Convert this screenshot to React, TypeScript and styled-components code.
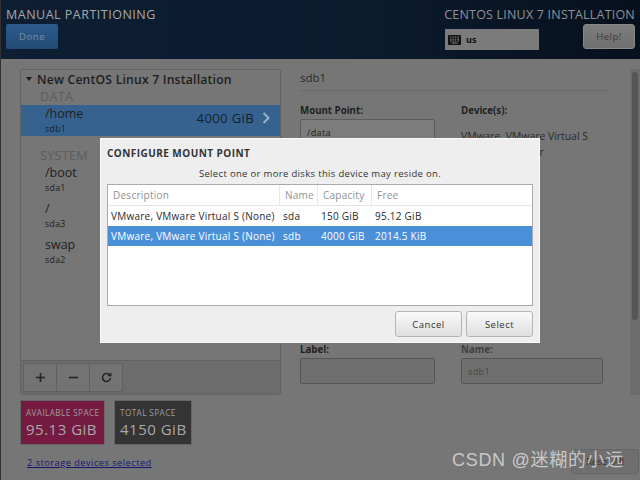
import { createGlobalStyle, styled } from "styled-components";

const Global = createGlobalStyle`
  html, body {
    margin: 0;
    padding: 0;
    width: 640px;
    height: 480px;
    overflow: hidden;
  }
  body {
    font-family: "Open Sans", "Noto Sans", "Noto Sans CJK SC", sans-serif;
    color: #2a2a2a;
  }
`;

const Page = styled.div`
  position: relative;
  width: 640px;
  height: 480px;
  background: #767676;
  border-left: 1px solid #333;
  box-sizing: border-box;
  overflow: hidden;
`;

const Header = styled.header`
  height: 59px;
  box-sizing: border-box;
  display: flex;
  justify-content: space-between;
  padding: 7px 5px 0 5px;
  background: linear-gradient(90deg, #0e1f33 0%, #0b1a2d 60%, #07101d 100%);
`;

const HeaderTitle = styled.div`
  font-size: 12.5px;
  line-height: 16px;
  color: #a5a9ad;
  letter-spacing: 0.5px;
`;

const DoneButton = styled.div`
  width: 52px;
  height: 25px;
  margin-top: 1px;
  border-radius: 2px;
  background: linear-gradient(#2c5c8c, #234a75);
  color: #7a8ea3;
  font-size: 9.5px;
  letter-spacing: 0.6px;
  display: flex;
  align-items: center;
  justify-content: center;
`;

const HeaderRight = styled.div`
  display: flex;
  flex-direction: column;
  align-items: flex-end;
`;

const InstallTitle = styled.div`
  font-size: 12.5px;
  line-height: 16px;
  color: #8e9296;
  letter-spacing: 0.2px;
  white-space: nowrap;
`;

const HeaderControls = styled.div`
  display: flex;
  align-items: flex-start;
  gap: 44px;
  margin-top: 1px;
  width: 190px;
`;

const Layout = styled.div`
  display: flex;
  align-items: center;
  gap: 5px;
  width: 94px;
  height: 21px;
  margin-top: 5px;
  padding-left: 3px;
  box-sizing: border-box;
  background: #7b7b7b;
  color: #111;
  font-size: 9px;
  font-weight: 700;
`;

const HelpButton = styled.div`
  width: 52px;
  height: 25px;
  border-radius: 3px;
  background: linear-gradient(#7c7c7c, #707070);
  border: 1px solid #888;
  box-sizing: border-box;
  color: #3a3a3a;
  font-size: 9.5px;
  letter-spacing: 0.5px;
  display: flex;
  align-items: center;
  justify-content: center;
`;

const Main = styled.main`
  display: grid;
  grid-template-columns: 261px 1fr 10px;
  padding: 10px 0 0 19px;
  column-gap: 19px;
`;

const LeftColumn = styled.div`
  display: flex;
  flex-direction: column;
`;

const ListPanel = styled.div`
  height: 326px;
  box-sizing: border-box;
  border: 1px solid #636363;
  border-radius: 2px;
  display: flex;
  flex-direction: column;
`;

const ListBody = styled.div`
  flex: 1;
`;

const InstallHeading = styled.div`
  display: flex;
  align-items: center;
  gap: 5px;
  height: 18px;
  padding-left: 5px;
  font-size: 12.2px;
  font-weight: 600;
  color: #1d1d1d;
  letter-spacing: 0.2px;
  white-space: nowrap;
`;

const Caret = styled.span`
  width: 0;
  height: 0;
  border-left: 3.5px solid transparent;
  border-right: 3.5px solid transparent;
  border-top: 4px solid #1d1d1d;
`;

const GroupLabel = styled.div<{ $gap?: number }>`
  height: 17px;
  line-height: 17px;
  margin-top: ${(p) => p.$gap ?? 0}px;
  padding-left: 19px;
  font-size: 12.6px;
  color: #5c5c5c;
  letter-spacing: 0.3px;
`;

const Mount = styled.div<{ $selected?: boolean }>`
  height: ${(p) => (p.$selected ? 31 : 36)}px;
  box-sizing: border-box;
  padding: 1px 10px 0 24px;
  background: ${(p) => (p.$selected ? "#36628f" : "transparent")};
  display: flex;
  justify-content: space-between;
  align-items: flex-start;
`;

const MountNames = styled.div`
  display: flex;
  flex-direction: column;
  gap: 1px;
`;

const MountPath = styled.div`
  font-size: 12.5px;
  line-height: 15px;
  color: #202020;
`;

const MountDevice = styled.div`
  font-size: 8.8px;
  line-height: 15px;
  color: #202020;
  letter-spacing: 0.3px;
`;

const MountSize = styled.div`
  display: flex;
  align-items: center;
  gap: 8px;
  height: 24px;
  font-size: 13.2px;
  font-weight: 500;
  color: #16202c;
  letter-spacing: 0.3px;
`;

const Toolbar = styled.div`
  height: 34px;
  box-sizing: border-box;
  padding: 2px;
  background: #6c6c6c;
  border-top: 1px solid #616161;
  display: flex;
`;

const ToolGroup = styled.div`
  display: flex;
  width: 100px;
  height: 29px;
  box-sizing: border-box;
  border: 1px solid #616161;
  border-radius: 2px;
  background: #737373;
`;

const ToolButton = styled.div`
  flex: 1;
  display: flex;
  align-items: center;
  justify-content: center;
  & + & {
    border-left: 1px solid #616161;
  }
`;

const Tiles = styled.div`
  display: flex;
  gap: 9px;
  margin-top: 5px;
`;

const Tile = styled.div<{ $bg: string; $width: number }>`
  width: ${(p) => p.$width}px;
  height: 45px;
  box-sizing: border-box;
  padding: 6px 0 0 5px;
  background: ${(p) => p.$bg};
  border: 1px solid #666;
`;

const TileLabel = styled.div`
  font-size: 8.2px;
  line-height: 12px;
  color: #9f9f9f;
  letter-spacing: 0.4px;
  white-space: nowrap;
`;

const TileValue = styled.div`
  font-size: 15px;
  line-height: 20px;
  font-weight: 500;
  color: #a9a9a9;
  letter-spacing: 0.5px;
  white-space: nowrap;
`;

const StorageLink = styled.a`
  margin: 12px 0 0 7px;
  font-size: 9.2px;
  line-height: 11px;
  color: #16166e;
  text-decoration: underline;
  letter-spacing: 0.5px;
`;

const Details = styled.section`
  display: flex;
  flex-direction: column;
  height: 326px;
  width: 310px;
`;

const DetailsTitle = styled.div`
  height: 22px;
  padding-top: 1px;
  box-sizing: border-box;
  border-bottom: 1px solid #6b6b6b;
  font-size: 11.5px;
  font-weight: 500;
  color: #2a2a2a;
`;

const FieldRow = styled.div<{ $top: number }>`
  display: grid;
  grid-template-columns: 135px 142px;
  column-gap: 26px;
  margin-top: ${(p) => p.$top}px;
`;

const Field = styled.div`
  display: flex;
  flex-direction: column;
  gap: 2px;
`;

const FieldLabel = styled.div<{ $dim?: boolean }>`
  font-size: 9.7px;
  line-height: 13px;
  font-weight: 700;
  color: ${(p) => (p.$dim ? "#3f3f3f" : "#1f1f1f")};
`;

const Input = styled.div<{ $dim?: boolean }>`
  height: 26px;
  box-sizing: border-box;
  padding-left: 6px;
  display: flex;
  align-items: center;
  border: 1px solid ${(p) => (p.$dim ? "#565656" : "#5c5c5c")};
  border-radius: 2px;
  background: ${(p) => (p.$dim ? "#6f6f6f" : "#7c7c7c")};
  font-size: 9px;
  letter-spacing: 0.4px;
  color: ${(p) => (p.$dim ? "#444" : "#1f1f1f")};
`;

const DeviceText = styled.div`
  font-size: 10.4px;
  line-height: 16px;
  padding-top: 9px;
  color: #2a2a2a;
  white-space: nowrap;
`;

const ScrollTrack = styled.div`
  height: 326px;
  width: 10px;
  background: #6d6d6d;
  padding: 3px 2px 0 2px;
  box-sizing: border-box;
`;

const ScrollThumb = styled.div`
  height: 248px;
  border-radius: 3px;
  background: #555;
`;

const ResetButton = styled.div`
  position: absolute;
  right: 1px;
  bottom: 6px;
  width: 68px;
  height: 25px;
  box-sizing: border-box;
  border: 1px solid #666;
  border-radius: 3px;
  background: #6f6f6f;
  color: #333;
  font-size: 9.5px;
  display: flex;
  align-items: center;
  justify-content: center;
`;

const Dialog = styled.div`
  position: absolute;
  left: 99px;
  top: 138px;
  width: 440px;
  height: 205px;
  box-sizing: border-box;
  padding: 0 6px 0 6px;
  background: #eeeeee;
  border: 1px solid #fafafa;
  display: flex;
  flex-direction: column;
`;

const DialogTitle = styled.div`
  margin-top: 8px;
  font-size: 10px;
  line-height: 13px;
  font-weight: 700;
  color: #333;
  letter-spacing: 0.45px;
`;

const DialogHint = styled.div`
  margin-top: 7px;
  text-align: center;
  font-size: 9.5px;
  line-height: 13px;
  color: #333;
  letter-spacing: 0.33px;
`;

const DiskTable = styled.div`
  margin-top: 4px;
  height: 122px;
  box-sizing: border-box;
  border: 1px solid #a9a9a9;
  background: #fff;
`;

const DiskRow = styled.div<{ $kind?: "head" | "selected" }>`
  display: grid;
  grid-template-columns: 172px 38px 54px 1fr;
  align-items: center;
  height: ${(p) => (p.$kind === "head" ? 21 : 20)}px;
  box-sizing: border-box;
  font-size: 10px;
  letter-spacing: 0.25px;
  white-space: nowrap;
  color: ${(p) =>
    p.$kind === "selected" ? "#fff" : p.$kind === "head" ? "#8f8f8f" : "#2a2a2a"};
  background: ${(p) => (p.$kind === "selected" ? "#4a90d9" : "transparent")};
  border-bottom: ${(p) => (p.$kind === "head" ? "1px solid #e6e6e6" : "none")};
`;

const DiskCell = styled.div<{ $head?: boolean }>`
  height: 100%;
  display: flex;
  align-items: center;
  padding-left: ${(p) => (p.$head ? 5 : 3)}px;
  border-right: ${(p) => (p.$head ? "1px solid #e6e6e6" : "none")};
  &:last-child {
    border-right: none;
  }
`;

const DialogActions = styled.div`
  display: flex;
  justify-content: flex-end;
  gap: 4px;
  margin-top: 5px;
`;

const DialogButton = styled.div`
  width: 67px;
  height: 26px;
  box-sizing: border-box;
  border: 1px solid #b5b5b5;
  border-radius: 3px;
  background: linear-gradient(#fafafa, #dfdfdf);
  color: #333;
  font-size: 9.5px;
  letter-spacing: 0.5px;
  display: flex;
  align-items: center;
  justify-content: center;
`;

const Watermark = styled.div`
  position: absolute;
  left: 451px;
  top: 449px;
  font-family: "Liberation Sans", "Noto Sans CJK SC", sans-serif;
  font-size: 18px;
  line-height: 22px;
  letter-spacing: 0.7px;
  color: rgba(255, 255, 255, 0.62);
  white-space: nowrap;
`;

const KeyboardIcon = () => (
  <svg width="13" height="10" viewBox="0 0 13 10">
    <rect width="13" height="10" rx="1" fill="#111" />
    <path
      d="M2 2h1.4M4.4 2h1.4M6.8 2h1.4M9.2 2h1.8M2 4.2h1.4M4.4 4.2h1.4M6.8 4.2h1.4M9.2 4.2h1.8M2 6h1.4M4.4 6h1.4M6.8 6h1.4M9.2 6h1.8M3.5 8h6"
      stroke="#8a8a8a"
      strokeWidth="1"
      fill="none"
    />
  </svg>
);

const ChevronIcon = () => (
  <svg width="8" height="12" viewBox="0 0 8 12">
    <path d="M1.5 1l5 5-5 5" stroke="#9fb0c2" strokeWidth="2" fill="none" />
  </svg>
);

const PlusIcon = () => (
  <svg width="9" height="9" viewBox="0 0 9 9">
    <path d="M4.5 0v9M0 4.5h9" stroke="#222" strokeWidth="1.6" />
  </svg>
);

const MinusIcon = () => (
  <svg width="9" height="9" viewBox="0 0 9 9">
    <path d="M0 4.5h9" stroke="#222" strokeWidth="1.6" />
  </svg>
);

const RefreshIcon = () => (
  <svg width="11" height="11" viewBox="0 0 11 11">
    <path d="M8.8 3.2A4 4 0 1 0 9.5 6" stroke="#222" strokeWidth="1.5" fill="none" />
    <path d="M6.4 3.9L10.4 4.4L10.4 0.6Z" fill="#222" />
  </svg>
);

const mounts = [
  { path: "/boot", device: "sda1" },
  { path: "/", device: "sda3" },
  { path: "swap", device: "sda2" },
];

const disks = [
  { name: "sda", capacity: "150 GiB", free: "95.12 GiB" },
  { name: "sdb", capacity: "4000 GiB", free: "2014.5 KiB", selected: true },
];

export default function App() {
  return (
    <Page>
      <Global />
      <Header>
        <div>
          <HeaderTitle>MANUAL PARTITIONING</HeaderTitle>
          <DoneButton>Done</DoneButton>
        </div>
        <HeaderRight>
          <InstallTitle>CENTOS LINUX 7 INSTALLATION</InstallTitle>
          <HeaderControls>
            <Layout>
              <KeyboardIcon />
              us
            </Layout>
            <HelpButton>Help!</HelpButton>
          </HeaderControls>
        </HeaderRight>
      </Header>
      <Main>
        <LeftColumn>
          <ListPanel>
            <ListBody>
              <InstallHeading>
                <Caret />
                New CentOS Linux 7 Installation
              </InstallHeading>
              <GroupLabel>DATA</GroupLabel>
              <Mount $selected>
                <MountNames>
                  <MountPath>/home</MountPath>
                  <MountDevice>sdb1</MountDevice>
                </MountNames>
                <MountSize>
                  4000 GiB
                  <ChevronIcon />
                </MountSize>
              </Mount>
              <GroupLabel $gap={11}>SYSTEM</GroupLabel>
              {mounts.map((m) => (
                <Mount key={m.device}>
                  <MountNames>
                    <MountPath>{m.path}</MountPath>
                    <MountDevice>{m.device}</MountDevice>
                  </MountNames>
                </Mount>
              ))}
            </ListBody>
            <Toolbar>
              <ToolGroup>
                <ToolButton>
                  <PlusIcon />
                </ToolButton>
                <ToolButton>
                  <MinusIcon />
                </ToolButton>
                <ToolButton>
                  <RefreshIcon />
                </ToolButton>
              </ToolGroup>
            </Toolbar>
          </ListPanel>
          <Tiles>
            <Tile $bg="#751b41" $width={85}>
              <TileLabel>AVAILABLE SPACE</TileLabel>
              <TileValue>95.13 GiB</TileValue>
            </Tile>
            <Tile $bg="#343434" $width={78}>
              <TileLabel>TOTAL SPACE</TileLabel>
              <TileValue>4150 GiB</TileValue>
            </Tile>
          </Tiles>
          <StorageLink>2 storage devices selected</StorageLink>
        </LeftColumn>
        <Details>
          <DetailsTitle>sdb1</DetailsTitle>
          <FieldRow $top={13}>
            <Field>
              <FieldLabel>Mount Point:</FieldLabel>
              <Input>/data</Input>
            </Field>
            <Field>
              <FieldLabel>Device(s):</FieldLabel>
              <DeviceText>
                VMware, VMware Virtual S
                <br />
                (sdb) and 1 other
              </DeviceText>
            </Field>
          </FieldRow>
          <FieldRow $top={183}>
            <Field>
              <FieldLabel>Label:</FieldLabel>
              <Input $dim />
            </Field>
            <Field>
              <FieldLabel $dim>Name:</FieldLabel>
              <Input $dim>sdb1</Input>
            </Field>
          </FieldRow>
        </Details>
        <ScrollTrack>
          <ScrollThumb />
        </ScrollTrack>
      </Main>
      <ResetButton>Reset All</ResetButton>
      <Dialog>
        <DialogTitle>CONFIGURE MOUNT POINT</DialogTitle>
        <DialogHint>Select one or more disks this device may reside on.</DialogHint>
        <DiskTable>
          <DiskRow $kind="head">
            <DiskCell $head>Description</DiskCell>
            <DiskCell $head>Name</DiskCell>
            <DiskCell $head>Capacity</DiskCell>
            <DiskCell $head>Free</DiskCell>
          </DiskRow>
          {disks.map((d) => (
            <DiskRow key={d.name} $kind={d.selected ? "selected" : undefined}>
              <DiskCell>VMware, VMware Virtual S (None)</DiskCell>
              <DiskCell>{d.name}</DiskCell>
              <DiskCell>{d.capacity}</DiskCell>
              <DiskCell>{d.free}</DiskCell>
            </DiskRow>
          ))}
        </DiskTable>
        <DialogActions>
          <DialogButton>Cancel</DialogButton>
          <DialogButton>Select</DialogButton>
        </DialogActions>
      </Dialog>
      <Watermark>CSDN @迷糊的小远</Watermark>
    </Page>
  );
}
